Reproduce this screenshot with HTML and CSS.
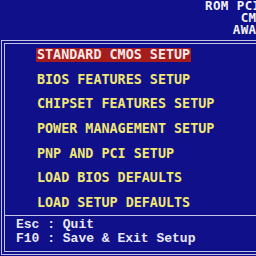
FILE: index.html
```html
<!DOCTYPE html>
<html lang="en">
<head>
    <meta charset="UTF-8">
    <meta name="viewport" content="width=device-width, initial-scale=1.0">
    <link rel="stylesheet" href="styles.css">
    <title>CMOS Setup Utility</title>
</head>
<body>

    <div class="header">
        <div class="title">
            <div>ROM PCI/ISA BIOS (2A59IS2B)</div>
            <div>CMOS SETUP UTILITY</div>
            <div>AWARD SOFTWARE, INC.</div>
        </div>
    </div>

    <div class="frame">
        <div class="menu">
            <div class="item selected">STANDARD CMOS SETUP</div>
            <div class="item">BIOS FEATURES SETUP</div>
            <div class="item">CHIPSET FEATURES SETUP</div>
            <div class="item">POWER MANAGEMENT SETUP</div>
            <div class="item">PNP AND PCI SETUP</div>
            <div class="item">LOAD BIOS DEFAULTS</div>
            <div class="item">LOAD SETUP DEFAULTS</div>
        </div>
        <div class="keys">
            <div>Esc : Quit</div>
            <div>F10 : Save &amp; Exit Setup</div>
        </div>
    </div>

</body>
</html>
```

FILE: styles.css
```css
body {
    margin: 0;
    width: 256px;
    height: 256px;
    overflow: hidden;
    background: #10108a;
    font-family: 'DejaVu Sans Mono', monospace;
    font-weight: bold;
}

.header {
    height: 40px;
    overflow: hidden;
}

.title {
    width: 240px;
    margin-left: 192px;
    text-align: center;
    white-space: nowrap;
    color: #f2f2f2;
    font-size: 12.5px;
    line-height: 12px;
    letter-spacing: 0.4px;
}

.frame {
    margin-left: 1px;
    width: 320px;
    border: 4px double #c4c4e8;
}

.menu {
    display: flex;
    flex-direction: column;
    align-items: flex-start;
    gap: 10.7px;
    padding: 4px 0 5px 31px;
}

.item {
    height: 14px;
    line-height: 14px;
    padding: 0 1px;
    color: #f0e872;
    font-size: 13.4px;
    white-space: nowrap;
}

.selected {
    background: #a41c1c;
    color: #f6e8e8;
}

.keys {
    border-top: 1px solid #c4c4e8;
    padding: 2px 0 5px 11px;
    color: #e8e8f4;
    font-family: 'Liberation Mono', monospace;
    font-size: 13px;
    line-height: 14px;
    white-space: nowrap;
}
```
